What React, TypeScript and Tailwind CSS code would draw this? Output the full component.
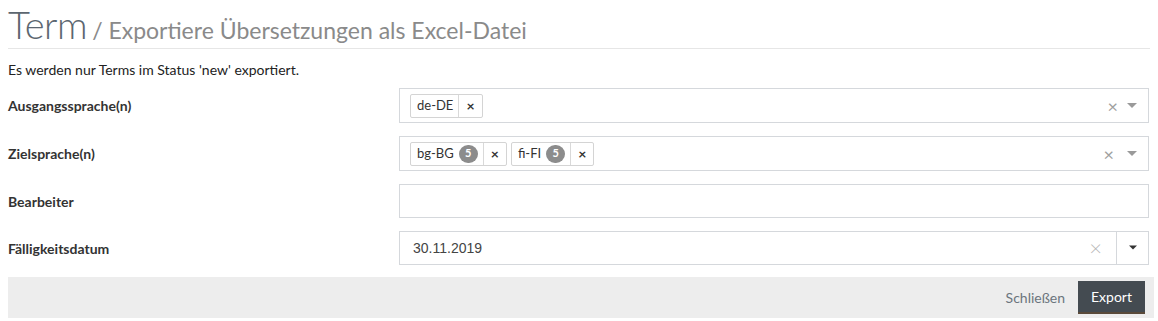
import React from "react";

const Caret = ({ cls }: { cls: string }) => (
  <svg width="10" height="6" viewBox="0 0 10 6" className={cls}>
    <path d="M0 0 L10 0 L5 5 Z" fill="currentColor" />
  </svg>
);

const Chip = ({ label, badge }: { label: string; badge?: string }) => (
  <div className="flex items-stretch h-[24px] border border-[#d4d4d4] rounded-[2px] text-[13px] text-[#333] bg-white">
    <div className="flex items-center gap-[5px] pl-[6px] pr-[5px]">
      <span>{label}</span>
      {badge && (
        <span className="inline-flex items-center justify-center h-[18px] min-w-[19px] px-[5px] rounded-full bg-[#8c8c8c] text-white text-[11px] font-bold">
          {badge}
        </span>
      )}
    </div>
    <div className="flex items-center border-l border-[#d9d9d9] px-[7px] text-[14px] font-bold text-[#333]">×</div>
  </div>
);

const Row = ({ label, children, h }: { label: string; children: React.ReactNode; h: string }) => (
  <div className={`flex items-center ${h}`}>
    <div className="w-[391px] shrink-0 font-bold text-[14px] text-[#333]">{label}</div>
    <div className="flex-1">{children}</div>
  </div>
);

export default function App() {
  return (
    <div className="px-2 bg-white" style={{ fontFamily: "Lato, 'Open Sans', sans-serif" }}>
      <div className="flex items-baseline h-[49px] pt-[2px] border-b border-[#e6e6e6]">
        <span className="text-[38px] font-light text-[#5c6670] leading-[44px] tracking-[-0.5px]">Term</span>
        <span className="text-[23px] text-[#8a8a8a] ml-[5px]">/ Exportiere Übersetzungen als Excel-Datei</span>
      </div>
      <div className="text-[14px] text-[#222] mt-[13px] leading-[16px]">Es werden nur Terms im Status 'new' exportiert.</div>
      <div className="mt-[10px] mr-[1px] flex flex-col gap-[13px]">
        <Row label="Ausgangssprache(n)" h="h-[35px]">
          <div className="h-[35px] border border-[#d5d8dc] flex items-center pl-[10px] pr-[11px]">
            <Chip label="de-DE" />
            <div className="flex-1" />
            <span className="text-[#a0a0a0] text-[18px] mr-[9px] leading-none">×</span>
            <Caret cls="text-[#9a9a9a]" />
          </div>
        </Row>
        <Row label="Zielsprache(n)" h="h-[35px]">
          <div className="h-[35px] border border-[#d5d8dc] flex items-center gap-[4px] pl-[10px] pr-[11px]">
            <Chip label="bg-BG" badge="5" />
            <Chip label="fi-FI" badge="5" />
            <div className="flex-1" />
            <span className="text-[#a0a0a0] text-[18px] mr-[9px] leading-none">×</span>
            <Caret cls="text-[#9a9a9a]" />
          </div>
        </Row>
        <Row label="Bearbeiter" h="h-[34px]">
          <div className="h-[34px] border border-[#d5d8dc]" />
        </Row>
        <Row label="Fälligkeitsdatum" h="h-[34px]">
          <div className="h-[34px] border border-[#d5d8dc] flex items-stretch">
            <div className="flex-1 flex items-center pl-[13px] text-[14px] text-[#444]" style={{ fontFamily: "'Liberation Sans', Arial, sans-serif" }}>
              30.11.2019
            </div>
            <div className="flex items-center pr-[14px] text-[#b5b5b5] text-[22px] font-light leading-none">×</div>
            <div className="w-[32px] border-l border-[#d5d8dc] flex items-center justify-center">
              <Caret cls="text-[#333] w-[8px]" />
            </div>
          </div>
        </Row>
      </div>
      <div className="mt-[12px] h-[41px] bg-[#ededed] flex items-center justify-end pr-[9px] gap-[13px] -mr-[4px]">
        <span className="text-[14px] text-[#6b757d]">Schließen</span>
        <button className="h-[33px] px-[13px] bg-[#444b51] text-white text-[14px] border-b-2 border-[#5a4a3a]">Export</button>
      </div>
    </div>
  );
}
